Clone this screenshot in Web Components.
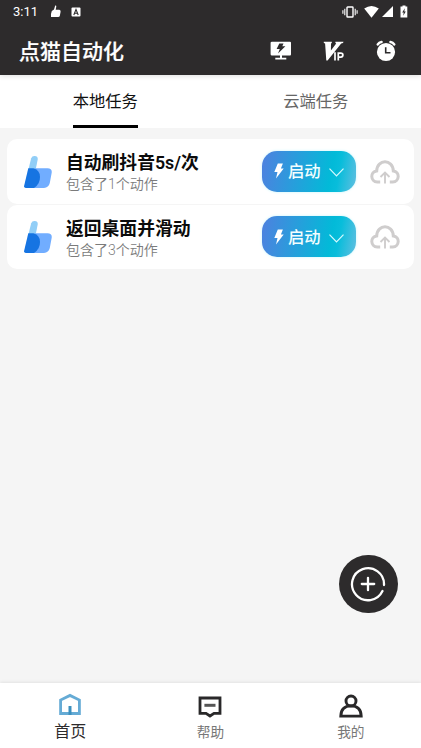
<!DOCTYPE html>
<html lang="zh-CN">
<head>
<meta charset="utf-8">
<title>点猫自动化</title>
<style>
html,body{margin:0;height:100%}
body{font-family:Roboto,"Noto Sans CJK SC",sans-serif;background:#f5f5f5;overflow:hidden}
</style>
</head>
<body>
<cat-app></cat-app>
<script>
const ICONS = {
  thumbSmall: ['0 0 12 13', '<path fill="#fff" d="M5.2.5Q6.4.2 6.3 1.5L5.7 4.7H9.3Q11 5 10.6 6.7L9.8 11Q9.4 12 8.2 12H1Q.7 8.5 1.8 6L4 4.5Z"/>'],
  letter: ['0 0 10 10', '<rect x=".5" y=".5" width="9" height="9" rx="1" fill="#fff"/><path fill="none" stroke="#2d2b2c" stroke-width="1.1" d="M2.8 8 5 2.4 7.2 8M3.5 6.2H6.5"/>'],
  vibrate: ['0 0 16 12', '<g fill="none" stroke="#fff"><rect x="5" y="1" width="6" height="10" rx=".6" stroke-width="1.4"/><path d="M2.8 2.8V9.2M13.2 2.8V9.2M.9 4.3V7.7M15.1 4.3V7.7" stroke-width="1.1"/></g>'],
  wifi: ['0 0 15 12', '<path fill="#fff" d="M.2 2.5Q7.5-2.5 14.8 2.5L7.5 11.7Z"/>'],
  signal: ['0 0 11 11', '<path fill="#fff" d="M11 0V11H0Z"/>'],
  battery: ['0 0 8 13', '<path fill="#fff" d="M2.5.5H5.5V1.5H7.3V12.4H.5V1.5H2.5Z"/><path fill="#2d2b2c" d="M4.8 3.3 2.2 7.4H3.7L3.2 10.7 5.8 6.5H4.3Z"/>'],
  screen: ['0 0 22 20', '<path fill="#fff" d="M2 .7H20Q21 .7 21 1.7V13.3Q21 14.5 20 14.5H12V16.8H16.3V18.4H5.3V16.8H10V14.5H2Q.6 14.5.6 13.3V1.7Q.6.7 2 .7Z"/><path fill="#2d2b2c" d="M9.3 2.5H13.5L12.3 5.3H15.4L8 12.4 9.8 8H6.6Z"/>'],
  vip: ['0 0 22 20', '<path fill="#fff" d="M.8.8H8.8V2L8 2.4 7.9 9.5 13.2 2.4 12.4 2V.8H20.5L20 1.9 18.2 2.5 4.6 19.5H3.3L2.1 2.4.8 2Z"/><path fill="none" stroke="#fff" stroke-width="1.7" d="M12 11.3V19.4M15.3 19.4V12.1H17.7Q19.9 12.1 19.9 14.1 19.9 16.1 17.7 16.1H15.3"/>'],
  alarm: ['0 0 20 22', '<circle cx="10" cy="12" r="9.1" fill="#fff"/><path fill="none" stroke="#fff" stroke-width="2.6" stroke-linecap="round" d="M1.8 4.4Q3.1 2.4 5.5 2M18.2 4.4Q16.9 2.4 14.5 2"/><path fill="none" stroke="#2d2b2c" stroke-width="1.6" d="M9.7 7.2V12.7H14.5"/>'],
  thumb: ['0 0 28 33', '<path fill="#91cef7" d="M4.3 15 7.2 3.3Q8.1.7 10.7.9 14.2 1.2 13.7 4.4L11.6 15Z"/><path fill="#71adff" d="M10.6 13.3H23.5Q28.6 13.5 27.6 18.3L25.8 28Q24.6 32.7 20 32.9H5Z"/><path fill="#1674e2" d="M4.3 13.3H9.5Q16 15.2 16 22 16 29.5 10 32.9H1.8Q-.3 32.8.2 30.5Z"/>'],
  bolt: ['0 0 10 16', '<path fill="#fff" d="M3.8.5H8.9L6.9 5.5H9.7L2 15.5 3.5 9H.3Z"/>'],
  chevron: ['0 0 15 9', '<path fill="none" stroke="#d7faff" stroke-width="1.2" d="M.5.6 7.5 7.9 14.5.6"/>'],
  cloud: ['0 0 30 24', '<path fill="none" stroke="#cfcdcd" stroke-width="3" d="M10.2 22H7.3C.2 21.5-.1 11.6 6.7 10.9 7.1-1.2 22.9-1.2 23.3 10.9 30.1 11.6 29.8 21.5 22.7 22H19.8"/><path fill="none" stroke="#cfcdcd" stroke-width="1.9" d="M15 23.4V13M10.5 17 15 12.6 19.5 17"/>'],
  add: ['0 0 36 36', '<g fill="none" stroke="#fff" stroke-width="2.3" stroke-linecap="round"><path d="M34 19A16 16 0 1 0 32.5 25"/><path d="M18 11.8V24.2M11.8 18H24.2"/></g>'],
  home: ['0 0 24 23', '<path fill="none" stroke="#65abd5" stroke-width="2.8" d="M2.6 20.5V7.1L12 2.4 21.4 7.1V20.5Z"/><path stroke="#3c8fbd" stroke-width="3" d="M12 13V21.9"/>'],
  help: ['0 0 24 22', '<path fill="none" stroke="#292829" stroke-width="2.8" d="M2 2H22V17.4H16L12 20 8 17.4H2Z"/><path stroke="#555" stroke-width="3" d="M6.4 9.3H17.5"/>'],
  user: ['0 0 24 24', '<g fill="none" stroke="#292829" stroke-width="2.9"><circle cx="12" cy="7" r="5"/><path d="M1.8 22.1C2 15 6 11.9 12 11.9S22 15 22.2 22.1Z"/></g>']
};
const define = (name, render) => customElements.define(name, class extends HTMLElement {
  constructor() { super(); this.attachShadow({mode: 'open'}); }
  connectedCallback() { this.shadowRoot.innerHTML = render(this); }
});
const icon = (name, w, h, cls = '') => `<cat-icon class="${cls}" name="${name}" w="${w}" h="${h}"></cat-icon>`;

define('cat-icon', el => {
  const [box, art] = ICONS[el.getAttribute('name')];
  return `<style>:host{display:block;flex:none;width:${el.getAttribute('w')}px;height:${el.getAttribute('h')}px}svg{display:block;width:100%;height:100%}</style>
  <svg viewBox="${box}" preserveAspectRatio="none">${art}</svg>`;
});
define('status-bar', () => `<style>
  :host{display:flex;align-items:center;height:23px;padding:0 13px;color:#fff;font-size:13px;box-sizing:border-box}
  .thumb{margin-left:12px}.letter{margin-left:9px}.vib{margin-left:auto}.wifi{margin-left:6px}.signal{margin-left:3px}.bat{margin-left:7px}
  </style><span>3:11</span>${icon('thumbSmall',12,13,'thumb')}${icon('letter',10,10,'letter')}${icon('vibrate',16,12,'vib')}${icon('wifi',15,12,'wifi')}${icon('signal',11,11,'signal')}${icon('battery',8,13,'bat')}`);
define('app-bar', () => `<style>
  :host{display:block;height:75px;background:#2d2b2c;color:#fff;flex:none;box-shadow:0 1px 5px rgba(0,0,0,.13);position:relative}
  .row{display:flex;align-items:center;height:56px;padding:0 25px 0 19px;box-sizing:border-box}
  h1{margin:2px auto 0 0;font-size:21px;font-weight:500;line-height:30px;-webkit-text-stroke:.2px #fff}
  .v{margin-left:31px}.a{margin-left:31px}
  </style><status-bar></status-bar><div class="row"><h1>点猫自动化</h1>${icon('screen',22,20)}${icon('vip',22,20,'v')}${icon('alarm',20,22,'a')}</div>`);
define('tab-item', () => `<style>
  :host{flex:1;display:flex;justify-content:center;color:#666;font-size:16.3px}
  span{display:block;height:53px;line-height:54px;box-sizing:border-box}
  :host([active]){color:#111}:host([active]) span{border-bottom:3px solid #000}
  </style><span><slot></slot></span>`);
define('tab-strip', () => `<style>:host{display:flex;height:53px;background:#fff;flex:none}</style><slot></slot>`);
define('start-button', () => `<style>
  :host{display:flex;align-items:center;width:93.5px;height:41px;box-sizing:border-box;padding-left:12px;border-radius:15px;color:#f3feff;font-size:16.3px;font-weight:500;background:linear-gradient(100deg,#4b83df 3%,#02bad8 72%,#08bddb 80%,#62bfe1 100%);box-shadow:0 0 3px #c4f5fb;flex:none}
  span{margin:2px 0 0 4px;line-height:24px}.c{margin-left:8px;margin-top:3px}
  </style>${icon('bolt',10,16)}<span><slot></slot></span>${icon('chevron',15,9,'c')}`);
define('task-card', () => `<style>
  :host{display:flex;align-items:center;height:64.5px;box-sizing:border-box;background:#fff;border-radius:10px;padding:0 14px 0 17px}
  .text{margin:4px auto 0 14px;white-space:nowrap}
  .t{font-size:17.8px;font-weight:600;line-height:22px;color:#0b0b0b}
  .s{font-size:14px;line-height:20px;color:#7b7b7b;font-weight:350}
  .cloud{margin-left:14.5px;margin-top:1px}
  </style>${icon('thumb',28,33)}<div class="text"><div class="t"><slot name="title"></slot></div><div class="s"><slot></slot></div></div><start-button>启动</start-button>${icon('cloud',30,24,'cloud')}`);
define('add-button', () => `<style>
  :host{position:absolute;right:23.5px;bottom:135px;width:58.5px;height:58.5px;border-radius:50%;background:#2d2b2c;display:grid;place-items:center}
  </style>${icon('add',36,36)}`);
define('nav-item', el => `<style>
  :host{flex:1;display:flex;flex-direction:column;align-items:center;color:#777;font-size:13.7px}
  .box{height:35px;display:flex;align-items:flex-end}
  span{line-height:22px;margin-top:3px}
  :host([active]){color:#2d2b2c;font-size:16px}
  :host([active]) .box{height:33px}
  :host([active]) span{margin-top:5px}
  </style><div class="box">${icon(el.getAttribute('icon'), 24, el.getAttribute('h'))}</div><span><slot></slot></span>`);
define('bottom-nav', () => `<style>:host{display:flex;height:65px;background:#fff;flex:none;box-shadow:0 -1px 3px rgba(0,0,0,.08)}</style><slot></slot>`);
define('cat-app', () => `<style>
  :host{display:flex;flex-direction:column;height:748px;background:#f5f5f5;position:relative}
  main{flex:1;padding:11px 7px 0;display:flex;flex-direction:column;gap:1px}
  </style>
  <app-bar></app-bar>
  <tab-strip><tab-item active>本地任务</tab-item><tab-item>云端任务</tab-item></tab-strip>
  <main>
    <task-card><span slot="title">自动刷抖音5s/次</span>包含了1个动作</task-card>
    <task-card><span slot="title">返回桌面并滑动</span>包含了3个动作</task-card>
  </main>
  <add-button></add-button>
  <bottom-nav><nav-item active icon="home" h="23">首页</nav-item><nav-item icon="help" h="22">帮助</nav-item><nav-item icon="user" h="24">我的</nav-item></bottom-nav>`);
</script>
</body>
</html>
